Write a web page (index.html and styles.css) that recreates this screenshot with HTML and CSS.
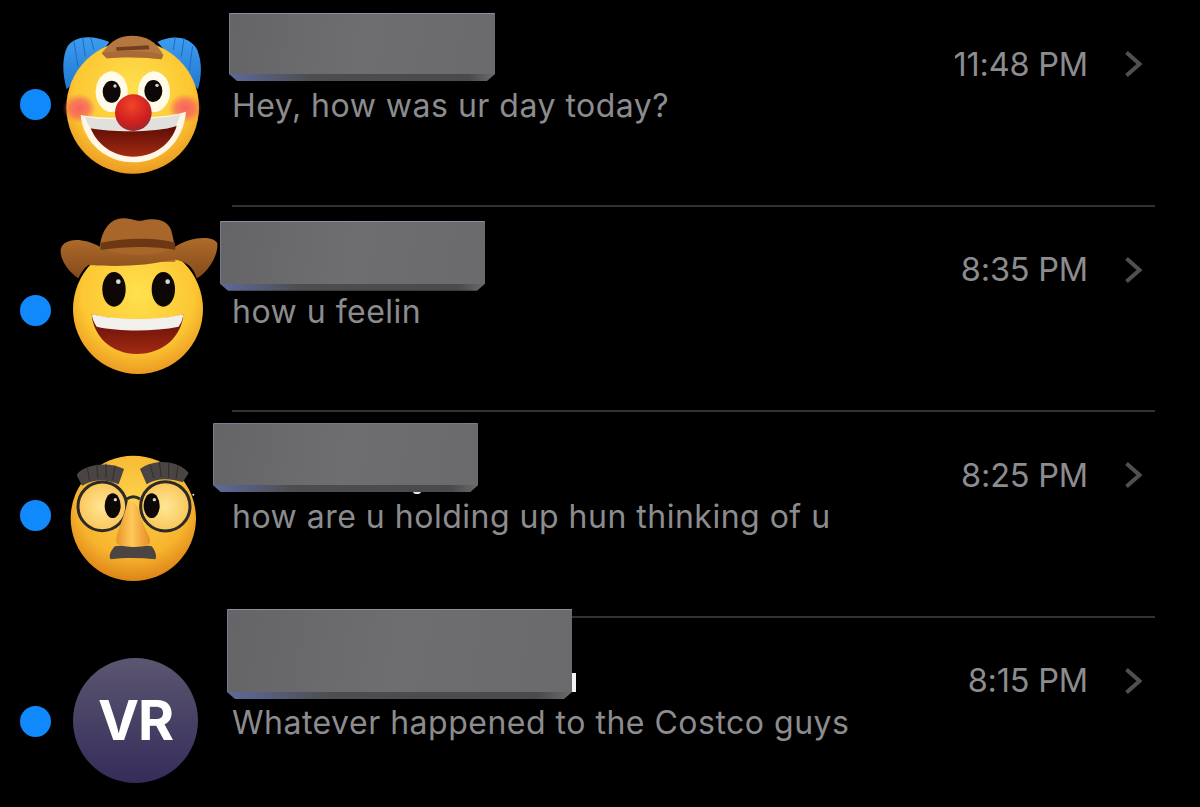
FILE: index.html
```html
<!DOCTYPE html>
<html lang="en">

<head>
    <meta charset="UTF-8">
    <meta name="viewport" content="width=device-width, initial-scale=1.0">
    <title>Messages</title>
    <link rel="stylesheet" href="styles.css">
</head>

<body>
    <!-- Shared gradients for the emoji avatars -->
    <svg class="svg-defs" aria-hidden="true">
        <defs>
            <radialGradient id="faceYellow" cx="50%" cy="38%" r="62%">
                <stop offset="0%" stop-color="#ffe14f" />
                <stop offset="70%" stop-color="#fcc733" />
                <stop offset="100%" stop-color="#ec9a22" />
            </radialGradient>
            <radialGradient id="faceOrange" cx="50%" cy="35%" r="65%">
                <stop offset="0%" stop-color="#fdd24c" />
                <stop offset="70%" stop-color="#f7b42e" />
                <stop offset="100%" stop-color="#dd8418" />
            </radialGradient>
            <radialGradient id="noseRed" cx="45%" cy="30%" r="75%">
                <stop offset="0%" stop-color="#f0452a" />
                <stop offset="65%" stop-color="#cf1f1f" />
                <stop offset="100%" stop-color="#8f2a32" />
            </radialGradient>
            <radialGradient id="cheekPink">
                <stop offset="0%" stop-color="#f8605f" />
                <stop offset="55%" stop-color="#f8605f" stop-opacity="0.7" />
                <stop offset="100%" stop-color="#f8605f" stop-opacity="0" />
            </radialGradient>
            <linearGradient id="hairBlue" x1="0" y1="0" x2="0" y2="1">
                <stop offset="0%" stop-color="#3d9cf0" />
                <stop offset="100%" stop-color="#1f78d0" />
            </linearGradient>
            <linearGradient id="mouthRed" x1="0" y1="0" x2="0" y2="1">
                <stop offset="0%" stop-color="#5c0d06" />
                <stop offset="100%" stop-color="#a32a12" />
            </linearGradient>
            <linearGradient id="hatBrown" x1="0" y1="0" x2="0" y2="1">
                <stop offset="0%" stop-color="#ad6c2c" />
                <stop offset="100%" stop-color="#86491a" />
            </linearGradient>
            <radialGradient id="lensTint">
                <stop offset="0%" stop-color="#ffe796" />
                <stop offset="100%" stop-color="#fac65a" />
            </radialGradient>
            <linearGradient id="noseOrange" x1="0" y1="0" x2="1" y2="0">
                <stop offset="0%" stop-color="#e8932a" />
                <stop offset="45%" stop-color="#ffc95a" />
                <stop offset="100%" stop-color="#e58c26" />
            </linearGradient>
        </defs>
    </svg>

    <div class="list">
        <!-- Row 1 -->
        <div class="row">
            <span class="dot"></span>
            <svg class="avatar" viewBox="153 0 543 618">
                <path d="M200 268C186 220 186 170 203 138C226 106 278 104 328 126L280 190Z" fill="url(#hairBlue)" />
                <path d="M472 126C518 102 572 110 592 150C608 192 604 232 594 268L525 185Z" fill="url(#hairBlue)" />
                <path d="M222 125L234 200M248 114L256 170M272 112L282 150M552 114L544 170M578 138L568 210M526 112L520 150" stroke="#1b6cc0" stroke-width="3" fill="none" />
                <circle cx="398" cy="322" r="199" fill="url(#faceYellow)" />
                <path d="M305 160C325 135 345 108 395 107C440 107 470 125 490 165L484 178C430 170 370 170 320 175Z" fill="#b5773f" />
                <path d="M348 142L350 152L448 148L446 136Z" fill="#6e4020" />
                <path d="M305 160C350 150 440 150 490 165L484 178C430 170 370 170 320 175Z" fill="#a96a35" />
                <ellipse cx="238" cy="325" rx="50" ry="44" fill="url(#cheekPink)" />
                <ellipse cx="555" cy="325" rx="50" ry="44" fill="url(#cheekPink)" />
                <ellipse cx="335" cy="275" rx="48" ry="61" fill="#fffbe8" />
                <ellipse cx="462" cy="275" rx="48" ry="61" fill="#fffbe8" />
                <ellipse cx="335" cy="275" rx="27" ry="33" fill="#0d0806" />
                <ellipse cx="460" cy="273" rx="27" ry="33" fill="#0d0806" />
                <circle cx="345" cy="258" r="5" fill="#d8d8d8" />
                <circle cx="471" cy="256" r="5" fill="#d8d8d8" />
                <path d="M242 345C310 358 490 358 558 335C550 430 480 487 400 487C320 487 250 430 242 345Z" fill="#fff6e6" />
                <path d="M256 350C320 362 480 362 542 342C535 362 530 372 528 380C460 396 340 396 272 385C264 372 258 362 256 350Z" fill="#e2e0dc" />
                <path d="M272 385C340 398 470 398 530 378C515 430 465 470 400 470C335 470 290 430 272 385Z" fill="url(#mouthRed)" />
                <circle cx="400" cy="338" r="55" fill="url(#noseRed)" />
            </svg>
            <div class="main">
                <div class="top">
                    <span class="time">11:48 PM</span>
                    <svg class="chevron" viewBox="0 0 18 28"><path d="M2.5 2.5L15.5 14L2.5 25.5" /></svg>
                </div>
                <p class="preview">Hey, how was ur day today?</p>
            </div>
            <div class="redact redact-a"><div class="redact-face"></div></div>
        </div>

        <!-- Row 2 -->
        <div class="row">
            <span class="dot"></span>
            <svg class="avatar" viewBox="153 18 543 618">
                <circle cx="414" cy="327" r="195" fill="url(#faceYellow)" />
                <path d="M300 140C305 90 330 55 370 55C395 55 410 65 425 62C470 52 505 60 515 95L526 145L526 185L300 185Z" fill="#a8662a" />
                <path d="M182 150C185 120 235 105 300 140C370 172 470 172 525 140C570 110 640 105 652 130C655 170 620 220 590 235C580 200 560 185 520 178C440 200 340 200 265 195C250 205 240 225 235 235C205 215 180 180 182 150Z" fill="url(#hatBrown)" />
                <path d="M303 128C380 112 470 112 525 128L526 150C470 138 380 138 301 150Z" fill="#6c3813" />
                <ellipse cx="342" cy="268" rx="35" ry="52" fill="#0d0806" />
                <ellipse cx="490" cy="268" rx="35" ry="52" fill="#0d0806" />
                <circle cx="355" cy="245" r="7" fill="#d8d8d8" />
                <circle cx="503" cy="245" r="7" fill="#d8d8d8" />
                <path d="M275 343C350 365 480 365 550 343C545 410 490 462 410 462C335 462 280 410 275 343Z" fill="url(#mouthRed)" />
                <path d="M275 343C350 362 480 362 550 343C548 362 540 375 536 380C460 395 360 395 290 380C282 370 277 355 275 343Z" fill="#f2f0ec" />
            </svg>
            <div class="main">
                <div class="top">
                    <span class="time">8:35 PM</span>
                    <svg class="chevron" viewBox="0 0 18 28"><path d="M2.5 2.5L15.5 14L2.5 25.5" /></svg>
                </div>
                <p class="preview">how u feelin</p>
            </div>
            <div class="redact redact-b"><div class="redact-face"></div></div>
        </div>

        <!-- Row 3 -->
        <div class="row">
            <span class="dot"></span>
            <svg class="avatar" viewBox="153 4 543 618">
                <circle cx="400" cy="326" r="188" fill="url(#faceOrange)" />
                <circle cx="307" cy="290" r="73" fill="url(#lensTint)" stroke="#2b2a28" stroke-width="9" />
                <circle cx="496" cy="290" r="74" fill="url(#lensTint)" stroke="#2b2a28" stroke-width="9" />
                <path d="M380 268C392 260 408 260 420 268" fill="none" stroke="#2b2a28" stroke-width="9" />
                <path d="M382 278C405 268 416 292 425 330C438 368 460 392 446 404C410 416 370 414 352 402C338 388 372 330 382 278Z" fill="url(#noseOrange)" />
                <ellipse cx="338" cy="288" rx="24" ry="37" fill="#0d0806" />
                <ellipse cx="455" cy="288" rx="24" ry="37" fill="#0d0806" />
                <circle cx="346" cy="270" r="5" fill="#d8d8d8" />
                <circle cx="463" cy="270" r="5" fill="#d8d8d8" />
                <path d="M345 410C365 405 385 413 400 412C420 413 440 405 455 410C465 422 472 440 466 449C420 444 370 444 332 449C324 438 335 420 345 410Z" fill="#4a4542" />
                <path d="M230 196C245 168 320 152 372 178L356 224C320 208 280 208 246 228Z" fill="#4a4542" />
                <path d="M420 178C470 143 540 156 566 190L548 218C510 206 470 204 440 224Z" fill="#4a4542" />
                <path d="M262 172L268 212M290 164L294 206M318 162L318 204M345 168L338 210M450 166L462 206M478 158L484 202M506 158L506 204M534 166L528 208" stroke="#2f2c2a" stroke-width="3" fill="none" />
                <circle cx="580" cy="255" r="3" fill="#e8e8e8" />
            </svg>
            <div class="main">
                <div class="top">
                    <span class="time">8:25 PM</span>
                    <svg class="chevron" viewBox="0 0 18 28"><path d="M2.5 2.5L15.5 14L2.5 25.5" /></svg>
                </div>
                <p class="preview">how are u holding up hun thinking of u</p>
            </div>
            <span class="name-speck"></span>
            <div class="redact redact-c"><div class="redact-face"></div></div>
        </div>

        <!-- Row 4 -->
        <div class="row row-last">
            <span class="dot"></span>
            <div class="avatar-slot">
                <div class="initials">VR</div>
            </div>
            <div class="main">
                <div class="top">
                    <span class="time">8:15 PM</span>
                    <svg class="chevron" viewBox="0 0 18 28"><path d="M2.5 2.5L15.5 14L2.5 25.5" /></svg>
                </div>
                <p class="preview">Whatever happened to the Costco guys</p>
            </div>
            <span class="name-tail"></span>
            <div class="redact redact-d"><div class="redact-face"></div></div>
        </div>
    </div>
</body>

</html>
```
FILE: styles.css
```css
/* Global Styles */
* {
    margin: 0;
    padding: 0;
    box-sizing: border-box;
}

html,
body {
    background: #000;
    overflow: hidden;
}

body {
    height: 807px;
    font-family: Inter, "Noto Sans", sans-serif;
}

.svg-defs {
    position: absolute;
    width: 0;
    height: 0;
}

/* Message rows */
.row {
    position: relative;
    display: flex;
    align-items: flex-start;
    height: 205.67px;
    padding-left: 20px;
}

.dot {
    flex-shrink: 0;
    width: 31px;
    height: 31px;
    margin-top: 89px;
    border-radius: 50%;
    background: #0f89fb;
}

.avatar {
    flex-shrink: 0;
    width: 181px;
    height: 206px;
}

.avatar-slot {
    flex-shrink: 0;
    width: 181px;
    padding-top: 41px;
    padding-left: 22px;
}

.initials {
    display: flex;
    align-items: center;
    justify-content: center;
    width: 125px;
    height: 125px;
    border-radius: 50%;
    background: linear-gradient(180deg, #5b5670, #352c5a);
    color: #fff;
    font-size: 55px;
    font-weight: 700;
    letter-spacing: -1px;
}

.main {
    flex: 0 0 923px;
    height: calc(100% + 1px);
    padding-top: 46px;
    border-bottom: 2px solid #323235;
}

.row-last .main {
    border-bottom: none;
}

.top {
    display: flex;
    align-items: center;
    justify-content: flex-end;
    gap: 36px;
    height: 36px;
    padding-right: 13px;
}

.time {
    font-size: 32.5px;
    letter-spacing: -0.2px;
    color: #8c8c8f;
}

.chevron {
    width: 18px;
    height: 28px;
}

.chevron path {
    fill: none;
    stroke: #505053;
    stroke-width: 4;
}

.preview {
    margin-top: 5px;
    font-size: 32px;
    line-height: 38px;
    letter-spacing: 0.5px;
    color: #8c8c8f;
}

/* Grey boxes that cover the contact names */
.redact {
    position: absolute;
    z-index: 2;
    background: linear-gradient(90deg, #5d6a9c, #4d4d50 30%, #4a4a4c 90%, #6a6a6c);
    clip-path: polygon(0 0, 100% 0, 100% calc(100% - 7px), calc(100% - 8px) 100%, 8px 100%, 0 calc(100% - 7px));
}

.redact-face {
    height: calc(100% - 7px);
    border-top: 1px solid #8c8fa0;
    border-left: 1px solid #767a92;
    border-radius: 2px;
    background: linear-gradient(100deg, #656567, #6e6e70 50%, #6a6a6c);
}

.redact-a {
    left: 229px;
    top: 13px;
    width: 266px;
    height: 68px;
}

.redact-b {
    left: 220px;
    top: 15px;
    width: 265px;
    height: 70px;
}

.redact-c {
    left: 213px;
    top: 12px;
    width: 265px;
    height: 69px;
}

.redact-d {
    left: 227px;
    top: -8px;
    width: 345px;
    height: 90px;
}

/* Bits of the names that stick out from under the boxes */
.name-tail {
    position: absolute;
    left: 572px;
    top: 56px;
    width: 4px;
    height: 19px;
    background: #f2f2f2;
}

.name-speck {
    position: absolute;
    left: 413px;
    top: 80px;
    width: 8px;
    height: 3px;
    border-radius: 0 0 4px 4px;
    background: #e8e8e8;
}
```
